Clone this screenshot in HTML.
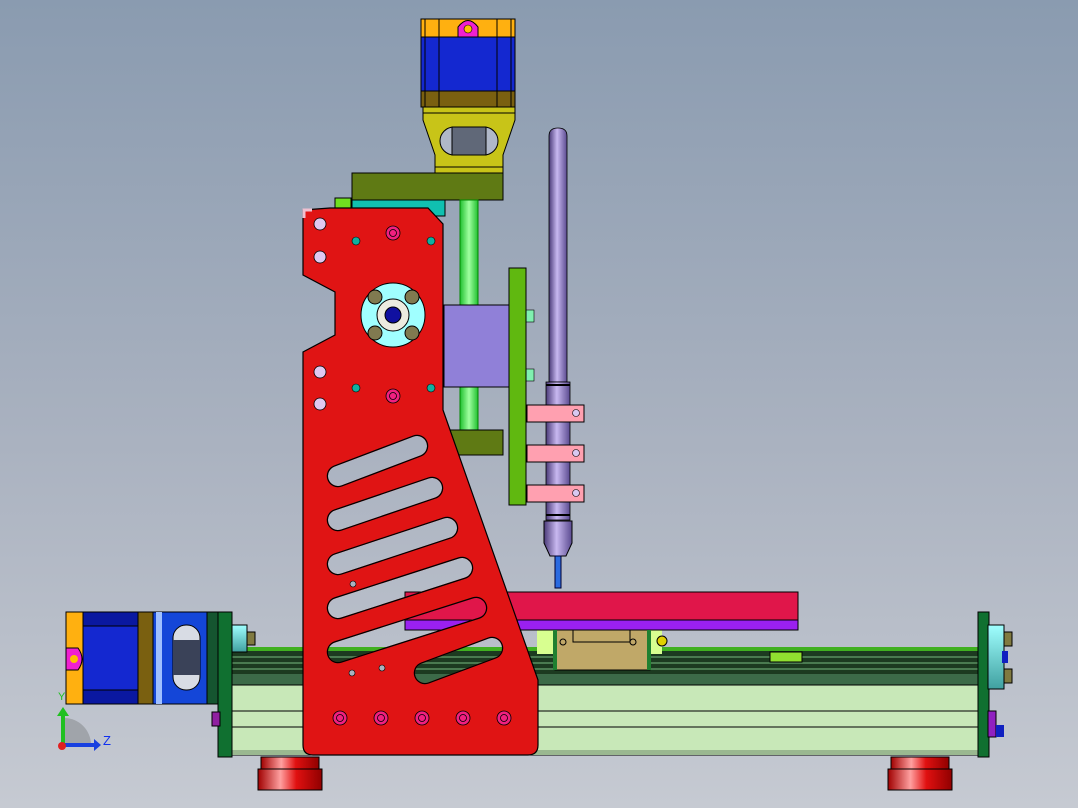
<!DOCTYPE html>
<html><head><meta charset="utf-8"><style>
html,body{margin:0;padding:0;width:1078px;height:808px;overflow:hidden}
svg{display:block}
text{font-family:"Liberation Sans",sans-serif}
</style></head><body>
<svg width="1078" height="808" viewBox="0 0 1078 808" xmlns="http://www.w3.org/2000/svg">
<defs>
<linearGradient id="bg" x1="0" y1="0" x2="0" y2="1">
<stop offset="0" stop-color="#8a9bb0"/><stop offset="0.55" stop-color="#aab2c0"/><stop offset="1" stop-color="#c6cad2"/></linearGradient>
<linearGradient id="rod" x1="0" x2="1"><stop offset="0" stop-color="#4a3a78"/><stop offset="0.45" stop-color="#c8b8f0"/><stop offset="1" stop-color="#5a4a90"/></linearGradient>
<linearGradient id="grod" x1="0" x2="1"><stop offset="0" stop-color="#20c030"/><stop offset="0.5" stop-color="#a0ffa0"/><stop offset="1" stop-color="#20c030"/></linearGradient>
<linearGradient id="foot" x1="0" x2="1"><stop offset="0" stop-color="#a00000"/><stop offset="0.35" stop-color="#ffa0a0"/><stop offset="0.6" stop-color="#e01010"/><stop offset="1" stop-color="#900000"/></linearGradient>
<linearGradient id="cyan" x1="0" y1="0" x2="0" y2="1"><stop offset="0" stop-color="#a0ffff"/><stop offset="1" stop-color="#40a0a0"/></linearGradient>
<g id="slotlines">
<line x1="338" y1="476" x2="417" y2="446"/>
<line x1="338" y1="520" x2="432" y2="488"/>
<line x1="338" y1="564" x2="447" y2="528"/>
<line x1="338" y1="608" x2="462" y2="568"/>
<line x1="338" y1="652" x2="476" y2="608"/>
<line x1="425" y1="673" x2="492" y2="648"/>
</g>
<mask id="slots">
<path d="M303,210 L330,208 L428,208 L443,224 L443,410 L538,680 L538,745 Q538,755 528,755 L313,755 Q303,755 303,745 L303,352 L335,335 L335,292 L303,275 Z" fill="#fff"/>
<use href="#slotlines" stroke="#000" stroke-width="20" stroke-linecap="round"/>
</mask>
<mask id="rings">
<use href="#slotlines" stroke="#fff" stroke-width="22.5" stroke-linecap="round"/>
<use href="#slotlines" stroke="#000" stroke-width="20" stroke-linecap="round"/>
</mask>
</defs>
<rect width="1078" height="808" fill="url(#bg)"/>

<!-- top motor -->
<rect x="421" y="19" width="94" height="88" fill="#1428d0" stroke="#000"/>
<rect x="421" y="19" width="94" height="18" fill="#ffb010" stroke="#000"/>
<rect x="421" y="91" width="94" height="16" fill="#7a6010" stroke="#000"/>
<rect x="425" y="19" width="14" height="88" fill="none" stroke="#000"/>
<rect x="497" y="19" width="14" height="88" fill="none" stroke="#000"/>
<path d="M458,37 L458,27 Q468,14 478,27 L478,37 Z" fill="#f020d0" stroke="#000"/>
<circle cx="468" cy="29" r="4" fill="#ffc000" stroke="#000" stroke-width="0.6"/>
<path d="M423,107 L515,107 L515,120 L503,155 L503,173 L435,173 L435,155 L423,120 Z" fill="#c8c418" stroke="#000"/>
<line x1="423" y1="113" x2="515" y2="113" stroke="#000"/>
<line x1="435" y1="167" x2="503" y2="167" stroke="#000"/>
<rect x="440" y="127" width="58" height="28" rx="14" fill="#b0b8c8" stroke="#000"/>
<rect x="452" y="127" width="34" height="28" fill="#606878" stroke="#000"/>
<rect x="352" y="173" width="151" height="27" fill="#5f7a14" stroke="#000"/>
<rect x="352" y="200" width="93" height="16" fill="#10c0b0" stroke="#000"/>
<rect x="335" y="198" width="16" height="10" fill="#70e020" stroke="#000"/>
<rect x="460" y="200" width="18" height="232" fill="url(#grod)" stroke="#080"/>
<rect x="440" y="430" width="63" height="25" fill="#5f7a14" stroke="#000"/>
<rect x="444" y="305" width="66" height="82" fill="#9080d8" stroke="#000"/>
<rect x="526" y="310" width="8" height="12" fill="#80f0b0" stroke="#000" stroke-width="0.6"/>
<rect x="526" y="369" width="8" height="12" fill="#80f0b0" stroke="#000" stroke-width="0.6"/>
<rect x="509" y="268" width="17" height="237" fill="#60b810" stroke="#000"/>
<path d="M549,136 Q549,128 558,128 Q567,128 567,136 L567,382 L549,382 Z" fill="url(#rod)" stroke="#000" stroke-width="0.8"/>
<rect x="546" y="382" width="24" height="138" fill="url(#rod)" stroke="#000" stroke-width="0.8"/>
<line x1="546" y1="385" x2="570" y2="385" stroke="#000" stroke-width="2"/>
<line x1="546" y1="515" x2="570" y2="515" stroke="#000" stroke-width="2"/>
<path d="M544,521 L572,521 L572,543 L566,556 L550,556 L544,543 Z" fill="url(#rod)" stroke="#000"/>
<rect x="555" y="556" width="6" height="32" fill="#2a6ae0" stroke="#003"/>
<g fill="#ffa0b0" stroke="#000">
<rect x="527" y="405" width="57" height="17"/><rect x="527" y="445" width="57" height="17"/><rect x="527" y="485" width="57" height="17"/>
</g>
<g fill="#d8c8f0" stroke="#000" stroke-width="0.6"><circle cx="576" cy="413" r="3.5"/><circle cx="576" cy="453" r="3.5"/><circle cx="576" cy="493" r="3.5"/></g>

<rect x="226" y="647" width="754" height="38" fill="#1c3a20"/>
<rect x="226" y="647" width="754" height="4" fill="#40b020"/>
<g stroke="#4a7a50" stroke-width="2"><line x1="226" y1="657" x2="980" y2="657"/><line x1="226" y1="663" x2="980" y2="663"/><line x1="226" y1="669" x2="980" y2="669"/></g>
<rect x="226" y="674" width="754" height="11" fill="#3c6a48"/>
<rect x="770" y="652" width="32" height="10" fill="#90e030" stroke="#000"/>
<rect x="220" y="685" width="760" height="70" fill="#c8e8b8" stroke="#000"/>
<line x1="220" y1="711" x2="980" y2="711" stroke="#000"/>
<line x1="220" y1="727" x2="980" y2="727" stroke="#000"/>
<rect x="220" y="750" width="760" height="5" fill="#9ab890"/>
<rect x="537" y="628" width="125" height="26" fill="#d8ff90"/>
<rect x="405" y="592" width="393" height="28" fill="#e0164a" stroke="#000"/>
<rect x="405" y="620" width="393" height="10" fill="#9a20f0" stroke="#000"/>
<rect x="555" y="630" width="95" height="40" fill="#c0a868" stroke="#000"/>
<rect x="573" y="630" width="57" height="12" fill="none" stroke="#000"/>
<rect x="553" y="630" width="4" height="40" fill="#208030"/><rect x="647" y="630" width="4" height="40" fill="#208030"/>
<circle cx="563" cy="642" r="3" fill="none" stroke="#000"/><circle cx="633" cy="642" r="3" fill="none" stroke="#000"/>
<circle cx="662" cy="641" r="5" fill="#e0d000" stroke="#000"/>
<rect x="261" y="757" width="58" height="12" fill="url(#foot)" stroke="#000"/>
<rect x="258" y="769" width="64" height="21" fill="url(#foot)" stroke="#000"/>
<rect x="891" y="757" width="58" height="12" fill="url(#foot)" stroke="#000"/>
<rect x="888" y="769" width="64" height="21" fill="url(#foot)" stroke="#000"/>
<rect x="218" y="612" width="14" height="145" fill="#107030" stroke="#000"/>
<rect x="232" y="625" width="15" height="27" fill="url(#cyan)" stroke="#000"/>
<rect x="247" y="632" width="8" height="13" fill="#807a40" stroke="#000"/>
<rect x="212" y="712" width="8" height="14" fill="#9020a0" stroke="#000"/>
<rect x="978" y="612" width="11" height="145" fill="#107030" stroke="#000"/>
<rect x="988" y="625" width="16" height="64" fill="url(#cyan)" stroke="#000"/>
<rect x="1004" y="632" width="8" height="14" fill="#807a40" stroke="#000"/>
<rect x="1004" y="669" width="8" height="14" fill="#807a40" stroke="#000"/>
<rect x="1002" y="651" width="6" height="12" fill="#1020c0"/>
<rect x="988" y="711" width="8" height="26" fill="#9020c0" stroke="#000"/>
<rect x="996" y="725" width="8" height="12" fill="#1020c0"/>
<rect x="66" y="612" width="87" height="92" fill="#1428d0" stroke="#000"/>
<rect x="66" y="612" width="17" height="92" fill="#ffb010" stroke="#000"/>
<rect x="138" y="612" width="15" height="92" fill="#7a6010" stroke="#000"/>
<rect x="83" y="612" width="55" height="14" fill="#0a18a0" stroke="#000"/>
<rect x="83" y="690" width="55" height="14" fill="#0a18a0" stroke="#000"/>
<path d="M66,648 L78,648 Q86,659 78,670 L66,670 Z" fill="#f020d0" stroke="#000"/>
<circle cx="74" cy="659" r="4" fill="#ffc000"/>
<rect x="153" y="612" width="62" height="92" fill="#1446d8" stroke="#000"/>
<rect x="156" y="612" width="6" height="92" fill="#a0c0ff"/>
<rect x="173" y="625" width="27" height="65" rx="13" fill="#d8dce4" stroke="#000"/>
<rect x="173" y="640" width="27" height="35" fill="#3a4258"/>
<rect x="207" y="612" width="11" height="92" fill="#155530" stroke="#000"/>

<g mask="url(#slots)">
<rect x="300" y="200" width="245" height="560" fill="#e01414"/>
</g>
<rect x="300" y="420" width="220" height="280" fill="#000" mask="url(#rings)"/>
<path d="M303,210 L330,208 L428,208 L443,224 L443,410 L538,680 L538,745 Q538,755 528,755 L313,755 Q303,755 303,745 L303,352 L335,335 L335,292 L303,275 Z" fill="none" stroke="#000" stroke-width="1.2"/>
<g fill="#e0c8f0" stroke="#000" stroke-width="0.8">
<circle cx="320" cy="224" r="6"/><circle cx="320" cy="257" r="6"/><circle cx="320" cy="372" r="6"/><circle cx="320" cy="404" r="6"/></g>
<path d="M304,218 L304,210 L312,210" fill="none" stroke="#f0c0d0" stroke-width="3"/>
<circle cx="393" cy="315" r="32" fill="#a0ffff" stroke="#000"/>
<circle cx="393" cy="315" r="16" fill="#ecebe0" stroke="#000"/>
<circle cx="393" cy="315" r="8" fill="#1010a0" stroke="#000"/>
<g fill="#807a50" stroke="#000"><circle cx="375" cy="297" r="7"/><circle cx="412" cy="297" r="7"/><circle cx="375" cy="333" r="7"/><circle cx="412" cy="333" r="7"/></g>
<g fill="#10b0a0" stroke="#000" stroke-width="0.6"><circle cx="356" cy="241" r="4"/><circle cx="431" cy="241" r="4"/><circle cx="356" cy="388" r="4"/><circle cx="431" cy="388" r="4"/></g>
<g fill="#f02080" stroke="#000" stroke-width="0.8">
<circle cx="393" cy="233" r="7"/><circle cx="393" cy="396" r="7"/>
<circle cx="340" cy="718" r="7"/><circle cx="381" cy="718" r="7"/><circle cx="422" cy="718" r="7"/><circle cx="463" cy="718" r="7"/><circle cx="504" cy="718" r="7"/></g>
<g fill="none" stroke="#000" stroke-width="0.8">
<circle cx="393" cy="233" r="3.5"/><circle cx="393" cy="396" r="3.5"/>
<circle cx="340" cy="718" r="3.5"/><circle cx="381" cy="718" r="3.5"/><circle cx="422" cy="718" r="3.5"/><circle cx="463" cy="718" r="3.5"/><circle cx="504" cy="718" r="3.5"/></g>
<g fill="#aab2c0" stroke="#000" stroke-width="0.6"><circle cx="353" cy="584" r="3"/><circle cx="352" cy="673" r="3"/><circle cx="382" cy="668" r="3"/></g>

<path d="M64,745 L64,718 A27,27 0 0 1 91,745 Z" fill="#a0a4aa"/>
<line x1="63" y1="745" x2="63" y2="715" stroke="#20c020" stroke-width="4"/>
<path d="M57,716 L63,707 L69,716 Z" fill="#20c020"/>
<line x1="63" y1="745" x2="95" y2="745" stroke="#1840e0" stroke-width="4"/>
<path d="M94,739 L101,745 L94,751 Z" fill="#1840e0"/>
<circle cx="62" cy="746" r="4" fill="#e02020"/>
<text x="103" y="745" font-size="13" fill="#1030f0">Z</text>
<text x="58" y="700" font-size="11" fill="#20c020">Y</text>
</svg>
</body></html>
